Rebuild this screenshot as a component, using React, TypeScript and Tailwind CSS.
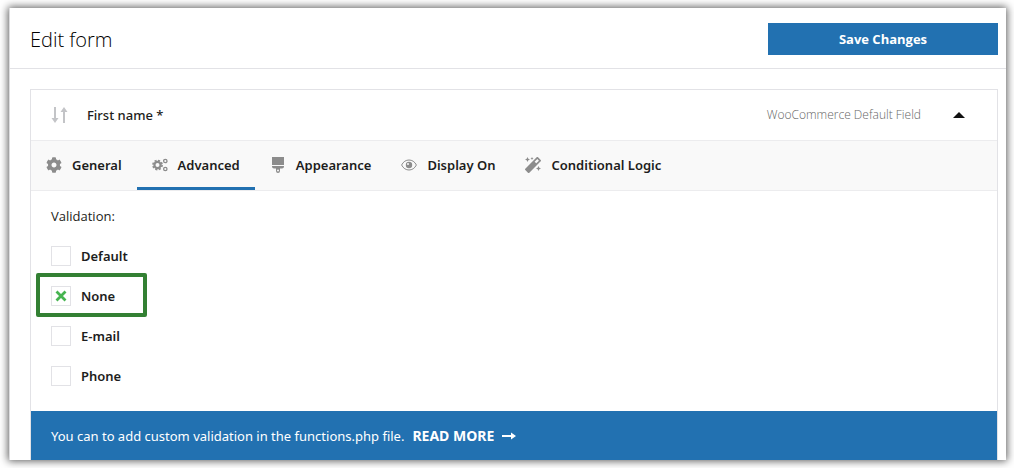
import { useState } from "react";
import type { JSX, ReactNode } from "react";
import { FaCog, FaMagic } from "react-icons/fa";

type IconProps = { className?: string };

function SortArrows() {
  return (
    <svg viewBox="0 0 18 18" className="h-[18px] w-[18px] fill-[#c3c4c7]">
      <path d="M3 1h2v11h2.500L4 17 .5 12H3z" />
      <path d="M12 17h2V6h2.500L13 1 9.500 6H12z" />
    </svg>
  );
}

function GearsIcon({ className }: IconProps) {
  return (
    <svg viewBox="0 0 16 16" className={className} fill="none" stroke="currentColor">
      <circle cx="5.500" cy="8" r="3.100" strokeWidth="2.200" />
      <circle cx="5.500" cy="8" r="4.600" strokeWidth="1.600" strokeDasharray="2.100 1.510" />
      <circle cx="13.300" cy="4" r="1.700" strokeWidth="1.300" />
      <circle cx="13.300" cy="12" r="1.700" strokeWidth="1.300" />
    </svg>
  );
}

function BrushIcon({ className }: IconProps) {
  return (
    <svg viewBox="0 0 16 16" className={className} fill="currentColor">
      <path d="M2 0h12v8H2z" />
      <path
        fillRule="evenodd"
        d="M2 9h12v.5a2 2 0 0 1-2 2h-2V14a2 2 0 0 1-4 0v-2.500H4a2 2 0 0 1-2-2zM8 12.500a1 1 0 1 0 0 2 1 1 0 0 0 0-2z"
      />
    </svg>
  );
}

function EyeIcon({ className }: IconProps) {
  return (
    <svg viewBox="0 0 16 16" className={className}>
      <path
        d="M.6 8C2.300 4.600 5 3 8 3S13.700 4.600 15.400 8C13.700 11.400 11 13 8 13S2.300 11.400.6 8z"
        fill="none"
        stroke="currentColor"
      />
      <circle cx="8" cy="8" r="3.200" fill="currentColor" />
      <circle cx="7" cy="7" r="1" fill="#f9f9f9" />
    </svg>
  );
}

const tabs: { title: string; icon: (props: IconProps) => ReactNode }[] = [
  { title: "General", icon: FaCog },
  { title: "Advanced", icon: GearsIcon },
  { title: "Appearance", icon: BrushIcon },
  { title: "Display On", icon: EyeIcon },
  { title: "Conditional Logic", icon: FaMagic },
];

const validations = ["Default", "None", "E-mail", "Phone"];

function ValidationOption({
  title,
  checked,
  onSelect,
}: {
  title: string;
  checked: boolean;
  onSelect: () => void;
}) {
  return (
    <label className="relative flex h-10 w-fit items-center gap-[10px] font-['Noto_Sans',sans-serif] font-semibold">
      <input
        type="radio"
        name="validation"
        className="peer h-5 w-5 appearance-none border border-[#e2e2e6] bg-white"
        checked={checked}
        onChange={onSelect}
      />
      <svg
        viewBox="0 0 20 20"
        className="pointer-events-none absolute left-0 top-[10px] hidden h-5 w-5 stroke-[#46b450] peer-checked:block"
      >
        <path d="M5.500 5.500l9 9M14.500 5.500l-9 9" strokeWidth="2.800" />
      </svg>
      {title}
      {checked ? (
        <span className="pointer-events-none absolute -left-[15px] -top-[3px] h-11 w-[111px] rounded-xs border-4 border-[#338033]" />
      ) : null}
    </label>
  );
}

export default function App(): JSX.Element {
  const [activeTab, setActiveTab] = useState("Advanced");
  const [validation, setValidation] = useState("None");

  return (
    <div className="bg-white p-2 pl-[9px] font-['Open_Sans',sans-serif] text-[13px] leading-5 text-[#1d1d20]">
      <main className="border-l border-[#dcdcde] bg-white shadow-[0_0_8px_1px_rgba(0,0,0,0.65)]">
        <header className="flex items-end justify-between border-b border-[#e2e2e6] pb-[13px] pl-5 pr-2 pt-[15px]">
          <h1 className="text-xl leading-[30px] font-light text-black">
            Edit form
          </h1>
          <button className="h-8 w-[230px] bg-[#2271b1] font-bold text-white">
            Save Changes
          </button>
        </header>

        <section className="ml-5 mr-2 mt-5 border border-b-0 border-[#e2e2e6]">
          <div className="flex h-[50px] items-center justify-between pl-5 pr-8">
            <div className="flex items-center gap-[18px]">
              <SortArrows />
              <h2 className="font-['Noto_Sans',sans-serif] font-medium">
                First name *
              </h2>
            </div>
            <div className="flex items-center gap-8">
              <span className="text-xs font-light text-[#666]">
                WooCommerce Default Field
              </span>
              <button aria-label="Collapse field">
                <svg viewBox="0 0 12 6" className="h-[6px] w-3 fill-[#111]">
                  <path d="M6 0l6 6H0z" />
                </svg>
              </button>
            </div>
          </div>

          <nav className="flex border-y border-[#ececee] bg-[#f9f9f9]">
            {tabs.map(({ title, icon: Icon }) => (
              <button
                key={title}
                onClick={() => setActiveTab(title)}
                className={
                  "flex h-[49px] items-center gap-[10px] border-b-3 px-[15px] pt-[2px] font-['Noto_Sans',sans-serif] font-semibold " +
                  (title === activeTab
                    ? "border-[#2271b1]"
                    : "border-transparent")
                }
              >
                <Icon className="h-4 w-4 text-[#8c8c8c]" />
                {title}
              </button>
            ))}
          </nav>

          <fieldset className="px-5 py-[15px]">
            <legend className="float-left mb-[10px] w-full">Validation:</legend>
            <div className="clear-both">
              {validations.map((title) => (
                <ValidationOption
                  key={title}
                  title={title}
                  checked={title === validation}
                  onSelect={() => setValidation(title)}
                />
              ))}
            </div>
          </fieldset>

          <p className="flex h-[49px] items-center gap-2 bg-[#2271b1] px-5 font-['Noto_Sans',sans-serif] text-white">
            You can to add custom validation in the functions.php file.
            <a href="#" className="flex items-center gap-2 text-sm font-bold">
              READ MORE
              <svg viewBox="0 0 14 8" className="h-2 w-[14px] fill-white">
                <path d="M0 3h9V.5L14 4 9 7.500V5H0z" />
              </svg>
            </a>
          </p>
        </section>
      </main>
    </div>
  );
}
